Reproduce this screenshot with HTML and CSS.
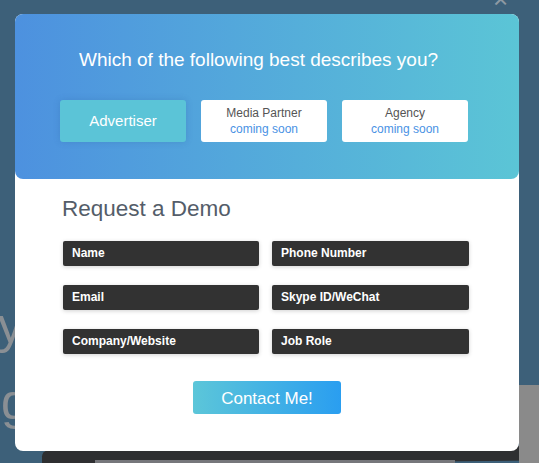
FILE: index.html
```html
<!DOCTYPE html>
<html lang="en">
<head>
<meta charset="utf-8">
<title>Request a Demo</title>
<link rel="stylesheet" href="styles.css">
</head>
<body>
<div class="page">
  <div class="bg-letter bg-y">y</div>
  <div class="bg-letter bg-g">g</div>
  <div class="bg-device"></div>
  <div class="bg-strip"></div>
  <div class="bg-right"></div>
  <div class="close">&times;</div>

  <div class="modal">
    <div class="modal-head">
      <h2 class="question">Which of the following best describes you?</h2>
      <div class="choices">
        <button class="choice choice-active">Advertiser</button>
        <button class="choice">Media Partner<span class="soon">coming soon</span></button>
        <button class="choice">Agency<span class="soon">coming soon</span></button>
      </div>
    </div>
    <form class="modal-body">
      <h3 class="form-title">Request a Demo</h3>
      <div class="fields">
        <div class="field">Name</div>
        <div class="field">Phone Number</div>
        <div class="field">Email</div>
        <div class="field">Skype ID/WeChat</div>
        <div class="field">Company/Website</div>
        <div class="field">Job Role</div>
      </div>
      <div class="actions">
        <button type="button" class="submit">Contact Me!</button>
      </div>
    </form>
  </div>
</div>
</body>
</html>
```
FILE: styles.css
```css
* { box-sizing: border-box; }
html, body {
  margin: 0;
  padding: 0;
}
body {
  font-family: "Liberation Sans", Arial, sans-serif;
  background: #3d6079;
}
.page {
  position: relative;
  width: 539px;
  height: 463px;
  overflow: hidden;
  background: #3d6079;
}
.bg-letter {
  position: absolute;
  font-size: 50px;
  line-height: 1;
  color: #8a8f94;
  font-family: "Liberation Sans", Arial, sans-serif;
}
.bg-y { left: -2px; top: 301px; }
.bg-g { left: 1px; top: 377px; }
.bg-right {
  position: absolute;
  left: 519px;
  top: 385px;
  width: 20px;
  height: 78px;
  background: #8a8a8a;
}
.bg-device {
  position: absolute;
  left: 42px;
  top: 448px;
  width: 497px;
  height: 15px;
  background: #2e2f31;
  border-top-left-radius: 6px;
  transform: skewY(-0.6deg);
}
.bg-strip {
  position: absolute;
  left: 95px;
  top: 460px;
  width: 360px;
  height: 6px;
  background: #76777b;
}
.close {
  position: absolute;
  left: 493px;
  top: -14px;
  font-size: 26px;
  line-height: 1;
  color: #8d99a3;
  font-weight: 300;
}
.modal {
  position: absolute;
  left: 15px;
  top: 14px;
  width: 504px;
  height: 437px;
  background: #fff;
  border-radius: 8px;
  display: flex;
  flex-direction: column;
}
.modal-head {
  height: 166px;
  border-radius: 8px;
  background: linear-gradient(90deg, #4d91df 0%, #5bc5d6 100%);
  padding: 34px 0 0 0;
}
.question {
  margin: 0;
  font-weight: normal;
  font-size: 19px;
  line-height: 24px;
  color: #fff;
  text-align: center;
  padding-right: 17px;
}
.choices {
  display: flex;
  gap: 15px;
  margin-top: 28px;
  padding-left: 45px;
}
.choice {
  width: 126px;
  height: 42px;
  border: 0;
  border-radius: 3px;
  background: #fff;
  color: #555;
  font-family: "Liberation Sans", Arial, sans-serif;
  font-size: 12px;
  line-height: 16px;
  padding: 0;
  display: flex;
  flex-direction: column;
  align-items: center;
  justify-content: center;
}
.soon {
  color: #4a92e4;
  font-size: 12px;
}
.choice-active {
  background: #5bc4d7;
  color: #fff;
  font-size: 15px;
  box-shadow: 0 0 6px rgba(40, 90, 160, 0.25);
}
.modal-body {
  padding: 17px 50px 37px 47px;
  margin: 0;
  display: flex;
  flex-direction: column;
}
.form-title {
  margin: 0;
  font-weight: normal;
  font-size: 22.5px;
  line-height: 26px;
  color: #545d69;
}
.fields {
  margin-top: 19px;
  padding-left: 1px;
  display: grid;
  grid-template-columns: 196px 197px;
  column-gap: 13px;
  row-gap: 19px;
}
.field {
  height: 25px;
  background: #323232;
  border-radius: 2px;
  box-shadow: 0 1px 4px rgba(0, 0, 0, 0.18);
  color: #fff;
  font-weight: bold;
  font-size: 12px;
  line-height: 25px;
  padding-left: 9px;
}
.actions {
  display: flex;
  justify-content: center;
  margin-top: 27px;
  padding-left: 3px;
}
.submit {
  width: 148px;
  height: 33px;
  border: 0;
  border-radius: 3px;
  background: linear-gradient(90deg, #5cc6d9 0%, #2a9ef0 100%);
  color: #fff;
  font-family: "Liberation Sans", Arial, sans-serif;
  font-size: 17px;
  padding: 0;
  padding-top: 2px;
}
```
